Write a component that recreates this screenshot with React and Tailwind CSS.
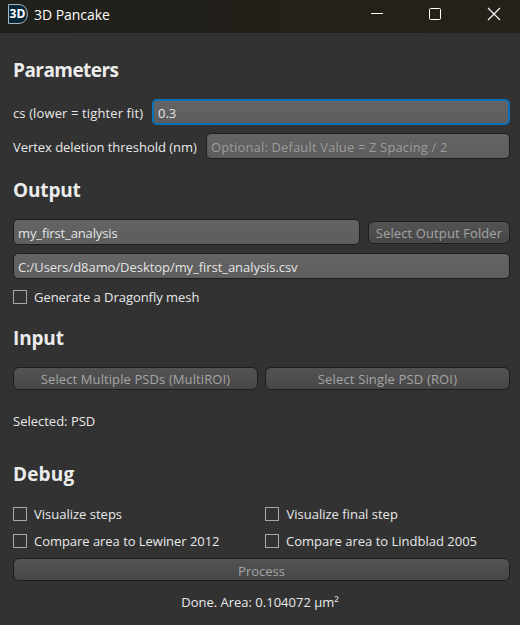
import React from "react";

function Heading({ children, className = "" }) {
  return <h2 className={`text-[19px] leading-[26px] font-bold text-[#ececec] ${className}`}>{children}</h2>;
}

function Field({ value, placeholder, focused, className = "" }) {
  const border = focused ? "border-2 border-[#0a70b8] px-[4px]" : "border border-[#1e1e1e] px-[4px]";
  const color = value ? "text-[#e4e4e4]" : "text-[#9c9c9c]";
  return (
    <div className={`flex h-[26px] items-center rounded-[5px] bg-linear-to-b from-[#646464] to-[#5d5d5d] pt-[2px] whitespace-nowrap ${border} ${color} ${className}`}>
      <span>{value || placeholder}</span>
    </div>
  );
}

function Button({ children, className = "" }) {
  return (
    <button className={`flex h-[23px] items-center justify-center rounded-[6px] border border-[#1e1e1e] bg-linear-to-b from-[#535353] to-[#474747] whitespace-nowrap text-[#a5a5a5] ${className}`}>
      {children}
    </button>
  );
}

function Check({ children, className = "" }) {
  return (
    <div className="flex h-[18px] items-center gap-[7px] whitespace-nowrap">
      <span className="h-[14px] w-[14px] shrink-0 border border-[#a8a8a8]" />
      <span className={className}>{children}</span>
    </div>
  );
}

export default function App() {
  return (
    <div className="h-[625px] w-[520px] overflow-hidden bg-[#323232] font-['Open_Sans','Noto_Sans',sans-serif] text-[13px] leading-[18px] text-[#e8e8e8]">
      <header className="flex h-[33px] items-start bg-linear-to-r from-[#20201b] to-[#262119] text-white">
        <svg className="mt-[4px] ml-[8px] shrink-0" width="20" height="20" viewBox="0 0 20 20">
          <path d="M.5 .5H10C16 .5 19.3 4.5 19.3 10S16 19.5 10 19.5H.5Z" fill="#07283a" stroke="#a9b6bb" />
          <text x="1.6" y="14" fontSize="12" fontWeight="700" fill="#fff" textLength="15.8" lengthAdjust="spacingAndGlyphs">3D</text>
        </svg>
        <span className="mt-[5px] ml-[6px] text-[14px] leading-[20px] tracking-[-0.05px]">3D Pancake</span>
        <svg className="mt-[7px] mr-[19px] ml-auto" width="130" height="14" viewBox="0 0 130 14" fill="none" stroke="#fff">
          <path d="M0 6.5H12" />
          <rect x="58.5" y="1.5" width="11" height="11" rx="1" />
          <path d="M117 1L129 13M129 1L117 13" strokeWidth="1.1" />
        </svg>
      </header>
      <main className="pr-[10px] pl-[13px]">
        <Heading className="pt-[24px] tracking-[-0.55px]">Parameters</Heading>
        <div className="mt-[16px] flex items-center justify-between">
          <span className="pt-[2px] tracking-[0.12px]">cs (lower = tighter fit)</span>
          <Field value="0.3" focused className="w-[358px]" />
        </div>
        <div className="mt-[8px] flex items-center justify-between">
          <span className="pt-[2px] tracking-[-0.04px]">Vertex deletion threshold (nm)</span>
          <Field placeholder="Optional: Default Value = Z Spacing / 2" className="w-[304px] tracking-[0.14px]" />
        </div>
        <Heading className="mt-[18px] tracking-[-0.15px]">Output</Heading>
        <div className="mt-[16px] flex items-center justify-between">
          <Field value="my_first_analysis" className="w-[347px] tracking-[-0.12px]" />
          <Button className="w-[142px] pt-[2px] tracking-[0.1px]">Select Output Folder</Button>
        </div>
        <Field value="C:/Users/d8amo/Desktop/my_first_analysis.csv" className="mt-[8px] tracking-[-0.05px]" />
        <div className="mt-[9px]">
          <Check className="tracking-[-0.04px]">Generate a Dragonfly mesh</Check>
        </div>
        <Heading className="mt-[19px] tracking-[-0.15px]">Input</Heading>
        <div className="mt-[16px] grid grid-cols-2 gap-[7px]">
          <Button className="tracking-[0.1px]">Select Multiple PSDs (MultiROI)</Button>
          <Button className="tracking-[0.15px]">Select Single PSD (ROI)</Button>
        </div>
        <p className="mt-[22px]">Selected: PSD</p>
        <Heading className="mt-[31px] tracking-[0.15px]">Debug</Heading>
        <div className="mt-[18px] grid grid-cols-2 gap-x-[7px] gap-y-[9px]">
          <Check>Visualize steps</Check>
          <Check className="pl-[0.5px]">Visualize final step</Check>
          <Check className="tracking-[-0.04px]">Compare area to Lewiner 2012</Check>
          <Check>Compare area to Lindblad 2005</Check>
        </div>
        <Button className="mt-[8px] w-full pt-[2px]">Process</Button>
        <p className="mt-[12px] pr-[3px] text-center">Done. Area: 0.104072 µm²</p>
      </main>
    </div>
  );
}
